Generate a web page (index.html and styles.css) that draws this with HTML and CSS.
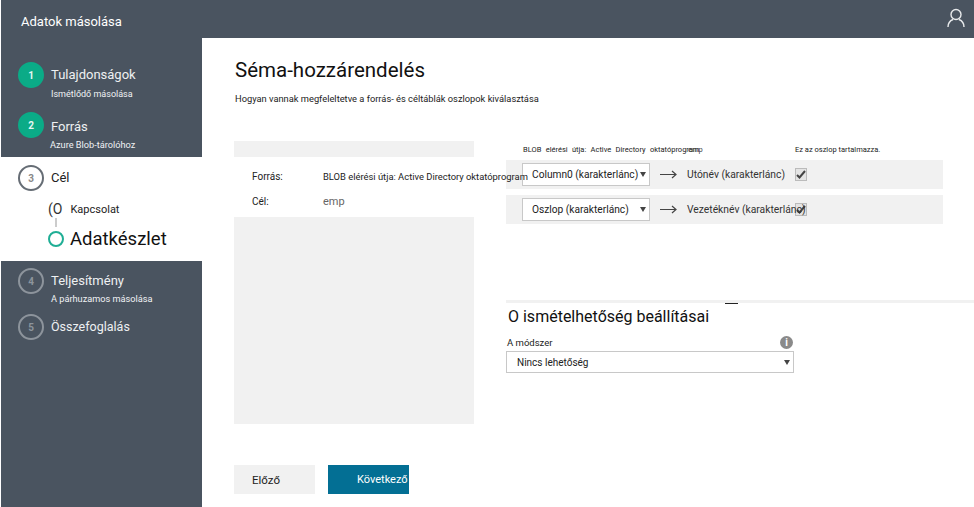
FILE: index.html
```html
<!DOCTYPE html>
<html lang="hu">
<head>
  <meta charset="UTF-8">
  <meta name="viewport" content="width=device-width, initial-scale=1.0">
  <title>Adatok másolása</title>
  <link rel="stylesheet" href="styles.css">
</head>
<body>
  <header class="topbar">
    <span class="app-title">Adatok másolása</span>
    <svg class="user-icon" width="18" height="20" viewBox="0 0 18 20" fill="none" stroke="#e8eaec" stroke-width="1.4">
      <circle cx="9" cy="6.5" r="5"/>
      <path d="M1 19c0-4 2.500-6.500 5-7.500M17 19c0-4-2.500-6.500-5-7.500"/>
    </svg>
  </header>
  <div class="layout">
    <nav class="sidebar">
      <div class="steps steps-top">
        <div class="step step-one">
          <span class="num done">1</span>
          <div>
            <div class="step-title">Tulajdonságok</div>
            <div class="step-sub">Ismétlődő másolása</div>
          </div>
        </div>
        <div class="step step-two">
          <span class="num done">2</span>
          <div>
            <div class="step-title">Forrás</div>
            <div class="step-sub shift">Azure Blob-tárolóhoz</div>
          </div>
        </div>
      </div>
      <div class="current">
        <div class="step">
          <span class="num active">3</span>
          <div class="step-title">Cél</div>
        </div>
        <div class="substep sub-link">
          <span class="sub-mark">(O</span>
          <span>Kapcsolat</span>
        </div>
        <div class="sub-line"></div>
        <div class="substep sub-data">
          <span class="ring"></span>
          <span>Adatkészlet</span>
        </div>
      </div>
      <div class="steps steps-bottom">
        <div class="step step-four">
          <span class="num">4</span>
          <div>
            <div class="step-title">Teljesítmény</div>
            <div class="step-sub">A párhuzamos másolása</div>
          </div>
        </div>
        <div class="step step-five">
          <span class="num">5</span>
          <div class="step-title">Összefoglalás</div>
        </div>
      </div>
    </nav>
    <main class="content">
      <h1>Séma-hozzárendelés</h1>
      <p class="lead">Hogyan vannak megfeleltetve a forrás- és céltáblák oszlopok kiválasztása</p>
      <div class="columns">
        <section class="summary">
          <div class="summary-strip"></div>
          <div class="summary-row first">
            <span class="summary-label">Forrás:</span>
            <span class="summary-value">BLOB elérési útja: Active Directory oktatóprogram</span>
          </div>
          <div class="summary-row">
            <span class="summary-label">Cél:</span>
            <span class="summary-value muted">emp</span>
          </div>
          <div class="summary-fill"></div>
        </section>
        <section class="mapping">
          <div class="map-head">
            <span class="head-source">BLOB elérési útja: Active Directory oktatóprogram</span>
            <span class="head-target">emp</span>
            <span class="head-check">Ez az oszlop tartalmazza.</span>
          </div>
          <div class="map-row">
            <div class="select small"><span>Column0 (karakterlánc)</span><i class="caret"></i></div>
            <svg class="arrow" width="17" height="9" viewBox="0 0 17 9" fill="none" stroke="#444" stroke-width="1.2"><path d="M0 4.500h16M12 1l4 3.500L12 8"/></svg>
            <span class="target">Utónév (karakterlánc)</span>
            <span class="check"><svg width="10" height="9" viewBox="0 0 10 9"><path d="M1 5l2.500 2.500L9 1" fill="none" stroke="#444" stroke-width="2"/></svg></span>
          </div>
          <div class="map-row">
            <div class="select small"><span>Oszlop (karakterlánc)</span><i class="caret"></i></div>
            <svg class="arrow" width="17" height="9" viewBox="0 0 17 9" fill="none" stroke="#444" stroke-width="1.2"><path d="M0 4.500h16M12 1l4 3.500L12 8"/></svg>
            <span class="target">Vezetéknév (karakterlánc)</span>
            <span class="check"><svg width="10" height="9" viewBox="0 0 10 9"><path d="M1 5l2.500 2.500L9 1" fill="none" stroke="#444" stroke-width="2"/></svg></span>
          </div>
          <div class="repeat">
            <div class="rule"><span class="rule-tick"></span></div>
            <h2>O ismételhetőség beállításai</h2>
            <div class="method-head">
              <span>A módszer</span>
              <span class="info">i</span>
            </div>
            <div class="select wide"><span>Nincs lehetőség</span><i class="caret"></i></div>
          </div>
        </section>
      </div>
      <div class="buttons">
        <button class="btn">Előző</button>
        <button class="btn primary">Következő</button>
      </div>
    </main>
  </div>
</body>
</html>
```

FILE: styles.css
```css
html, body {
  margin: 0;
  height: 507px;
  overflow: hidden;
}
body {
  font-family: Roboto, "Liberation Sans", sans-serif;
  background: #ffffff;
  color: #222;
}
.topbar {
  height: 38px;
  background: #4a5460;
  margin-left: 1px;
  padding: 0 9px 0 20px;
  display: flex;
  align-items: center;
  justify-content: space-between;
}
.app-title {
  color: #fff;
  font-size: 13px;
  margin-top: 5px;
}
.user-icon {
  margin-bottom: 2px;
}
.layout {
  display: flex;
  height: 469px;
}
.sidebar {
  width: 201px;
  margin-left: 1px;
  background: #4a5460;
  display: flex;
  flex-direction: column;
}
.steps-top {
  height: 119px;
  padding-top: 24px;
  box-sizing: border-box;
}
.step {
  display: flex;
  gap: 7px;
  padding-left: 17px;
  align-items: flex-start;
}
.step-two {
  margin-top: 12px;
}
.num {
  width: 22px;
  height: 22px;
  flex: none;
  border: 2px solid #8d949c;
  border-radius: 50%;
  display: flex;
  align-items: center;
  justify-content: center;
  font-size: 10px;
  font-weight: 700;
  color: #8d949c;
}
.num.done {
  background: #0bab87;
  border-color: #0bab87;
  color: #e6f7f3;
}
.num.active {
  border-color: #666d75;
  color: #888;
}
.step-title {
  color: #eef0f2;
  font-size: 13px;
  line-height: 26px;
  height: 26px;
}
.step-two .step-title {
  line-height: 30px;
  height: 28px;
}
.step-five .step-title {
  font-size: 12.500px;
}
.step-sub {
  color: #f0f2f4;
  font-size: 9px;
  line-height: 12px;
}
.step-sub.shift {
  margin-left: -1px;
  margin-top: -1px;
  font-size: 9.200px;
}
.current {
  background: #fff;
  height: 104px;
  padding-top: 8px;
  box-sizing: border-box;
}
.current .step-title {
  color: #222;
}
.substep {
  display: flex;
  align-items: center;
  color: #222;
}
.sub-link {
  font-size: 11px;
  height: 18px;
  margin-top: 9px;
  padding-left: 47px;
  gap: 8px;
}
.sub-mark {
  font-size: 14px;
  color: #333;
}
.sub-line {
  width: 2px;
  height: 9px;
  margin-left: 54px;
  background: #ccc;
}
.sub-data {
  font-size: 18.500px;
  height: 24px;
  padding-left: 47px;
  gap: 6px;
  color: #111;
}
.ring {
  width: 12px;
  height: 12px;
  border: 2px solid #1fae95;
  border-radius: 50%;
}
.steps-bottom {
  padding-top: 7px;
}
.step-four {
  margin-bottom: 9px;
}
.step-four .step-title {
  height: 25px;
}
.step-four .step-sub {
  font-size: 9.200px;
}
.content {
  flex: 1;
  padding-left: 32px;
}
h1 {
  margin: 18px 0 0 1px;
  font-size: 20.500px;
  font-weight: 400;
  line-height: 28px;
  color: #111;
}
.lead {
  margin: 9px 0 0 1px;
  font-size: 9.300px;
  line-height: 12px;
}
.columns {
  display: flex;
  gap: 32px;
  margin-top: 36px;
  height: 283px;
}
.summary {
  width: 240px;
  flex: none;
  display: flex;
  flex-direction: column;
  position: relative;
  z-index: 1;
}
.summary-strip {
  height: 16px;
  background: #f1f1f1;
}
.summary-fill {
  height: 207px;
  background: #f1f1f1;
  margin-top: 3px;
}
.summary-row {
  display: flex;
  height: 25px;
  align-items: center;
  font-size: 10px;
  padding-left: 18px;
  white-space: nowrap;
}
.summary-row.first {
  margin-top: 7px;
}
.summary-label {
  width: 71px;
  flex: none;
}
.summary-value {
  font-size: 9.400px;
}
.summary-value.muted {
  color: #666;
  font-size: 11px;
}
.mapping {
  width: 468px;
  flex: none;
}
.map-head {
  display: flex;
  height: 19px;
  box-sizing: border-box;
  padding: 0 0 3px 17px;
  font-size: 7.500px;
  align-items: center;
  white-space: nowrap;
  word-spacing: 2.500px;
}
.head-source {
  width: 165px;
  flex: none;
}
.head-target {
  width: 107px;
  flex: none;
  color: #444;
}
.head-check {
  word-spacing: 0;
}
.map-row {
  width: 437px;
  height: 29px;
  margin-bottom: 6px;
  background: #f1f1f1;
  display: flex;
  align-items: center;
  padding-left: 16px;
  box-sizing: border-box;
}
.select {
  display: flex;
  align-items: center;
  justify-content: space-between;
  background: #fff;
  border: 1px solid #c8c8c8;
  box-sizing: border-box;
  font-size: 10.200px;
  white-space: nowrap;
}
.select.small {
  width: 128px;
  height: 23px;
  padding: 0 3px 0 9px;
  flex: none;
}
.select.wide {
  width: 288px;
  height: 22px;
  padding: 0 3px 0 10px;
  font-size: 10px;
}
.caret {
  width: 0;
  height: 0;
  flex: none;
  border-left: 3px solid transparent;
  border-right: 3px solid transparent;
  border-top: 5px solid #444;
}
.arrow {
  flex: none;
  margin-left: 10px;
}
.target {
  width: 108px;
  flex: none;
  margin-left: 10px;
  font-size: 10.300px;
  color: #333;
  white-space: nowrap;
  position: relative;
  z-index: 1;
}
.check {
  width: 10px;
  height: 11px;
  flex: none;
  background: #e4e4e4;
  border: 1px solid #bbb;
  display: flex;
  align-items: center;
  justify-content: center;
}
.repeat {
  margin-top: 76px;
}
.rule {
  height: 3px;
  background: #f1f1f1;
  display: flex;
  align-items: flex-end;
  padding-left: 219px;
}
.rule-tick {
  width: 13px;
  height: 1px;
  margin-bottom: -1px;
  background: #222;
}
h2 {
  margin: 3px 0 0 2px;
  font-size: 16px;
  font-weight: 400;
  line-height: 22px;
  color: #111;
}
.method-head {
  width: 286px;
  margin: 6px 0 1px 1px;
  display: flex;
  justify-content: space-between;
  align-items: center;
  font-size: 9.500px;
  height: 16px;
}
.info {
  width: 13px;
  height: 13px;
  border-radius: 50%;
  background: #8a8a8a;
  color: #fff;
  font-size: 10px;
  font-weight: 700;
  text-align: center;
  line-height: 13px;
}
.buttons {
  display: flex;
  gap: 13px;
  margin-top: 41px;
}
.btn {
  width: 81px;
  height: 29px;
  border: 0;
  padding: 0 0 0 18px;
  background: #f1f1f1;
  color: #222;
  font: inherit;
  font-size: 11.500px;
  text-align: left;
}
.btn.primary {
  background: #036f94;
  color: #fff;
  padding-left: 29px;
  white-space: nowrap;
  font-size: 11px;
}
```
